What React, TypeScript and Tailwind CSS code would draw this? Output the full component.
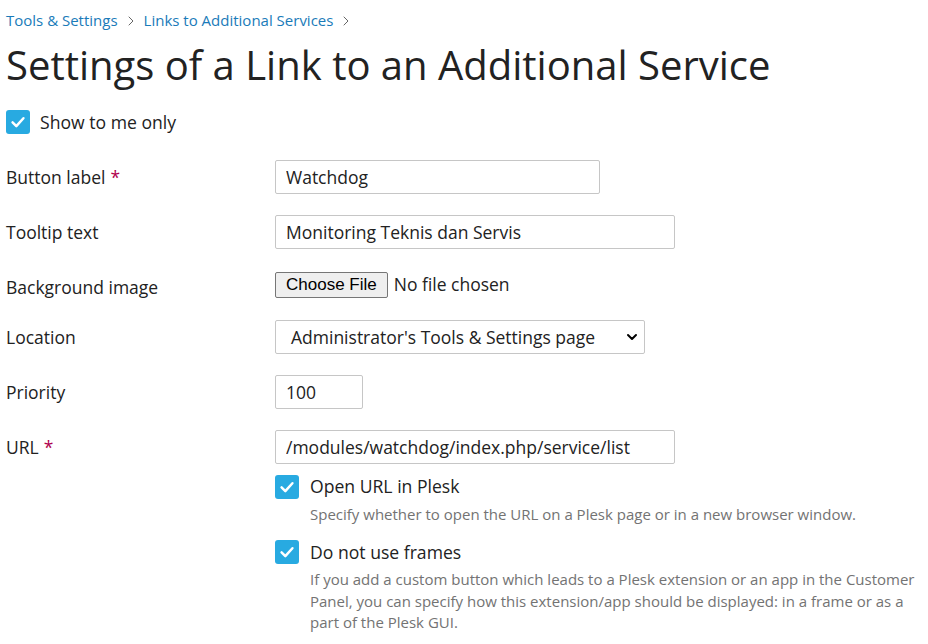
import { ChevronDown, ChevronRight } from "lucide-react";

function Check({ checked = true }: { checked?: boolean }) {
  return (
    <span className="grid size-6 shrink-0 place-items-center rounded-[3px] bg-[#28aae1]">
      {checked ? (
        <svg viewBox="0 0 24 24" className="size-5" fill="none" stroke="white" strokeWidth="3" strokeLinecap="round" strokeLinejoin="round">
          <path d="M5.5 12.5l4.5 4.5 8.5-9.5" />
        </svg>
      ) : null}
    </span>
  );
}

function Row({
  label,
  required,
  short,
  children,
}: {
  label: string;
  required?: boolean;
  short?: boolean;
  children: React.ReactNode;
}) {
  return (
    <div className={`flex items-start ${short ? "min-h-[50px]" : "min-h-[55px]"}`}>
      <div className="w-[269px] shrink-0 pt-[5px] text-[17.5px] leading-[24px]">
        {label}
        {required ? <span className="ml-[5px] text-[#b0004e]">*</span> : null}
      </div>
      <div className="min-w-0 flex-1">{children}</div>
    </div>
  );
}

const input = "h-[34px] rounded-[2px] border border-[#c6c6c6] bg-white px-[10px] text-[17.5px] text-[#222] outline-none";

export default function App() {
  return (
    <div className="min-h-[644px] bg-white pl-[6px] text-[#222]" style={{ fontFamily: '"Open Sans", sans-serif' }}>
      <nav className="flex h-[40px] items-center gap-[5px] pt-[1px] text-[15px] text-[#1a7bb9]">
        <a href="#">Tools &amp; Settings</a>
        <ChevronRight className="size-4 text-[#666]" strokeWidth={1.5} />
        <a href="#">Links to Additional Services</a>
        <ChevronRight className="size-4 text-[#666]" strokeWidth={1.5} />
      </nav>
      <h1 className="-mt-[1px] text-[40px] leading-[52px] font-normal text-[#222]">
        Settings of a Link to an Additional Service
      </h1>
      <label className="mt-[18px] flex items-center gap-[10px] text-[17.6px]">
        <Check />
        Show to me only
      </label>
      <div className="mt-[25px] flex flex-col">
        <Row label="Button label" required>
          <input className={`${input} w-[325px]`} defaultValue="Watchdog" />
        </Row>
        <Row label="Tooltip text">
          <input className={`${input} w-[400px]`} defaultValue="Monitoring Teknis dan Servis" />
        </Row>
        <Row label="Background image" short>
          <div className="flex items-center gap-[6px] pt-[1px]">
            <button
              type="button"
              className="h-[26px] rounded-[2px] border border-[#767676] bg-[#efefef] px-[10px] text-[17px] leading-[22px] text-black"
              style={{ fontFamily: '"Liberation Sans", Arial, sans-serif' }}
            >
              Choose File
            </button>
            <span className="text-[17.5px]">No file chosen</span>
          </div>
        </Row>
        <Row label="Location">
          <div className={`${input} flex w-[370px] items-center justify-between pr-[4px] pl-[15px]`}>
            <span>Administrator's Tools &amp; Settings page</span>
            <ChevronDown className="size-4 text-black" strokeWidth={3} />
          </div>
        </Row>
        <Row label="Priority">
          <input className={`${input} w-[88px]`} defaultValue="100" />
        </Row>
        <Row label="URL" required>
          <input className={`${input} w-[400px]`} defaultValue="/modules/watchdog/index.php/service/list" />
          <div className="mt-[9px] flex flex-col">
            <label className="flex items-center gap-[11px] text-[17.6px]">
              <Check />
              Open URL in Plesk
            </label>
            <p className="mt-[3px] pl-[35px] text-[15px] leading-[22px] text-[#737373]">
              Specify whether to open the URL on a Plesk page or in a new browser window.
            </p>
            <label className="mt-[14px] flex items-center gap-[11px] text-[17.6px]">
              <Check />
              Do not use frames
            </label>
            <p className="mt-[4px] w-[645px] pl-[35px] text-[15px] leading-[21.5px] text-[#737373]">
              If you add a custom button which leads to a Plesk extension or an app in the Customer Panel, you can specify how this extension/app should be displayed: in a frame or as a part of the Plesk GUI.
            </p>
          </div>
        </Row>
      </div>
    </div>
  );
}
